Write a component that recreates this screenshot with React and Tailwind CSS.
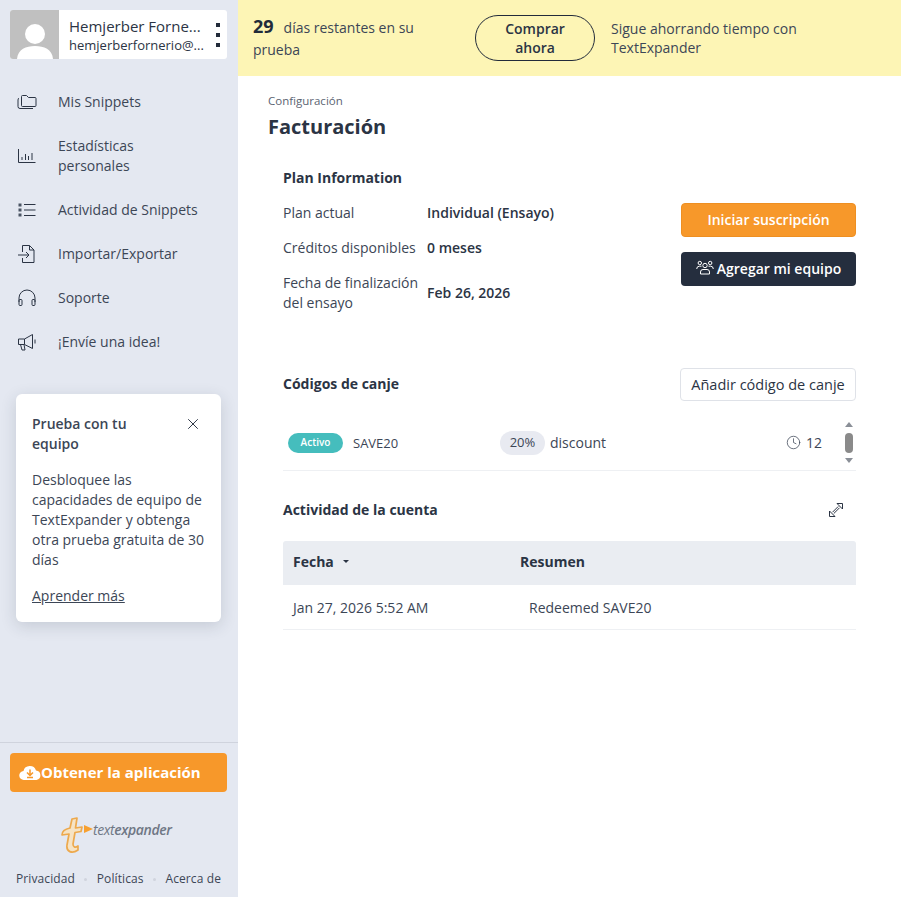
import { X, Clock } from 'lucide-react';

const iconProps = { width: 20, height: 20, viewBox: '0 0 20 20', fill: 'none', stroke: '#2b3444', strokeWidth: 1, className: 'shrink-0' };

function FolderIcon() {
  return (
    <svg {...iconProps}>
      <path d="M4.5 13.5 V4.5 Q4.5 3.5 5.5 3.5 H9.5 L11.5 5.5 H18 Q19 5.5 19 6.5 V13.5 Q19 14.5 18 14.5 H5.5 Q4.5 14.5 4.5 13.5 Z" />
      <path d="M2 6 Q1 6.5 1 8 V14.5 Q1 16.5 3 16.5 H16" />
    </svg>
  );
}

function ChartIcon() {
  return (
    <svg {...iconProps}>
      <path d="M1.5 3 V16.5 H18.5" />
      <path d="M5 14 V11 M8.5 14 V8 M11.5 14 V10 M15 14 V7" />
    </svg>
  );
}

function ListIcon() {
  return (
    <svg {...iconProps}>
      <rect x="1.5" y="3.5" width="3" height="3" fill="#4a5464" stroke="none" />
      <rect x="1.5" y="8.5" width="3" height="3" fill="#4a5464" stroke="none" />
      <rect x="1.5" y="13.5" width="3" height="3" fill="#4a5464" stroke="none" />
      <path d="M7 4.5 H18.5 M7 10 H18.5 M7 15.5 H18.5" />
    </svg>
  );
}

function ImportIcon() {
  return (
    <svg {...iconProps}>
      <path d="M5.5 8 V1.5 H12.5 L17 6 V18.5 H5.5 V14" />
      <path d="M12.5 1.5 V6 H17" />
      <path d="M1 11 H12 M9 8 L12 11 L9 14" />
    </svg>
  );
}

function HeadsetIcon() {
  return (
    <svg {...iconProps}>
      <path d="M2 14 V10 A8 8 0 0 1 18 10 V14" />
      <rect x="2" y="11.5" width="3" height="6" rx="1" />
      <rect x="15" y="11.5" width="3" height="6" rx="1" />
    </svg>
  );
}

function MegaphoneIcon() {
  return (
    <svg {...iconProps}>
      <path d="M1.5 7 H7.5 L15.5 2.5 V16.5 L7.5 12.5 H1.5 Z" />
      <path d="M7.5 7 V12.5" />
      <path d="M3.5 12.5 L5 18 H8 L7 12.5" />
      <path d="M18 7.5 V11.5" />
    </svg>
  );
}

const navItems = [
  { label: 'Mis Snippets', icon: FolderIcon },
  { label: 'Estadísticas personales', icon: ChartIcon },
  { label: 'Actividad de Snippets', icon: ListIcon },
  { label: 'Importar/Exportar', icon: ImportIcon },
  { label: 'Soporte', icon: HeadsetIcon },
  { label: '¡Envíe una idea!', icon: MegaphoneIcon },
];

function Logo() {
  return (
    <div className="flex items-start h-[38px] mt-[25px] pl-[49px]">
      <svg width="36" height="37" viewBox="0 0 34 37" fill="none" className="shrink-0">
        <path d="M12 2 L17 1 L15.5 11 L22 10 L21 14.5 L15 15.5 L13 27 C13 30 15 31 18 29 L18 33 C12 37 6 35 7 28 L9 17 L2 18 C2 14 5 12 10 11 Z" fill="#f6e3c4" stroke="#eda94d" strokeWidth="1.7" strokeLinejoin="round" />
        <path d="M24 8 L33 12 L24 16 Z" fill="#f7a030" />
      </svg>
      <span className="text-[14px] leading-[18px] mt-[4px] ml-[-2px] italic text-[#6f7785] tracking-[-0.4px]">
        text<span className="font-semibold">expander</span>
      </span>
    </div>
  );
}

function Sidebar() {
  return (
    <aside className="w-[238px] h-[897px] shrink-0 bg-[#e4e8f1] flex flex-col">
      <div className="flex ml-[10px] mr-[11px] mt-[10px] h-[49px] rounded-[3px] overflow-hidden bg-white">
        <div className="w-[49px] bg-[#c0c0c0] overflow-hidden shrink-0">
          <svg width="49" height="49" viewBox="0 0 49 49">
            <circle cx="25" cy="24" r="10" fill="#fff" />
            <path d="M7 49 C8 39 16 36 25 36 C34 36 42 39 43 49 Z" fill="#fff" />
          </svg>
        </div>
        <div className="flex-1 min-w-0 pl-[10px] pt-[6px]">
          <div className="text-[15px] leading-[20px] text-[#2b3444] whitespace-nowrap">Hemjerber Forne...</div>
          <div className="text-[13px] leading-[20px] text-[#2b3444] mt-[-1px] whitespace-nowrap">hemjerberfornerio@...</div>
        </div>
        <div className="w-[18px] flex flex-col items-center justify-center gap-[6px] shrink-0 pr-[1px]">
          <span className="w-[4px] h-[4px] bg-[#222b3a]" />
          <span className="w-[4px] h-[4px] bg-[#222b3a]" />
          <span className="w-[4px] h-[4px] bg-[#222b3a]" />
        </div>
      </div>

      <nav className="mt-[21px]">
        {navItems.map(({ label, icon: Icon }) => (
          <div key={label} className="flex items-center pl-[17px] pr-[30px] py-[12px] text-[14px] leading-[20px] text-[#3c4656]">
            <Icon />
            <span className={label.length > 22 ? 'ml-[21px] w-[110px]' : 'ml-[21px]'}>{label}</span>
          </div>
        ))}
      </nav>

      <div className="ml-[16px] mr-[17px] mt-[30px] h-[228px] bg-white rounded-[6px] shadow-[0_4px_16px_rgba(40,50,70,0.16)] px-[16px] pt-[20px]">
        <div className="flex justify-between">
          <div className="text-[14px] leading-[20px] font-semibold text-[#3c4656]">Prueba con tu<br />equipo</div>
          <X size={18} strokeWidth={1.3} className="text-[#2b3444] mt-[1px] mr-[3px]" />
        </div>
        <p className="text-[14px] leading-[20px] text-[#3c4656] mt-[16px]">
          Desbloquee las capacidades de equipo de TextExpander y obtenga otra prueba gratuita de 30 días
        </p>
        <a className="block text-[14px] leading-[20px] text-[#3c4656] underline mt-[16px]">Aprender más</a>
      </div>

      <div className="mt-auto border-t border-[#cfd3dd] h-[155px] pl-[10px] pr-[11px] pt-[10px]">
        <button className="w-full h-[39px] bg-[#f7982a] rounded-[4px] flex items-center pl-[9px] text-white text-[15px] font-bold">
          <svg width="22" height="18" viewBox="0 0 22 18" className="shrink-0">
            <path d="M5 16 A4.5 4.5 0 0 1 4.5 7 A6.5 6.5 0 0 1 17 6.5 A4.8 4.8 0 0 1 17.5 16 Z" fill="#fff" />
            <path d="M11 5.5 V11 M8 8.5 L11 11.5 L14 8.5 M8 13.5 H14" stroke="#f7982a" strokeWidth="1.5" fill="none" />
          </svg>
          Obtener la aplicación
        </button>
        <Logo />
        <div className="flex items-center justify-between px-[6px] mt-[16px] text-[12px] leading-[16px] text-[#3c4656] tracking-[0.1px]">
          <span>Privacidad</span>
          <span className="w-[3px] h-[3px] rounded-full bg-[#d0d4de]" />
          <span>Políticas</span>
          <span className="w-[3px] h-[3px] rounded-full bg-[#d0d4de]" />
          <span>Acerca de</span>
        </div>
      </div>
    </aside>
  );
}

function TrialBanner() {
  return (
    <div className="h-[76px] bg-[#fdf5b5] flex items-center pl-[15px] text-[14px] leading-[20px] text-[#3c4656]">
      <div className="w-[180px] mr-[42px] leading-[22px]">
        <span className="text-[18px] font-bold text-[#222b3a] mr-[10px]">29</span>
        días restantes en su prueba
      </div>
      <button className="w-[120px] h-[46px] border border-[#222b3a] rounded-[23px] text-[14px] leading-[19px] font-semibold text-[#2b3444] px-[20px]">
        Comprar ahora
      </button>
      <div className="w-[220px] ml-[16px] leading-[19.5px]">Sigue ahorrando tiempo con TextExpander</div>
    </div>
  );
}

function PlanRow({ label, value }) {
  return (
    <div className="flex items-center">
      <div className="w-[144px] text-[14px] leading-[20px] text-[#3c4656]">{label}</div>
      <div className="text-[14px] leading-[20px] font-semibold text-[#2b3444]">{value}</div>
    </div>
  );
}

function Billing() {
  return (
    <div className="pl-[45px] pr-[45px]">
      <div className="pt-[17px] ml-[-15px] text-[11.5px] leading-[16px] text-[#5b6472]">Configuración</div>
      <h1 className="ml-[-15px] mt-[4px] text-[20px] leading-[28px] font-bold text-[#2b3444]">Facturación</h1>

      <h2 className="mt-[27px] text-[14px] leading-[20px] font-bold text-[#2b3444]">Plan Information</h2>
      <div className="flex justify-between">
        <div className="mt-[15px] flex flex-col gap-[15px] w-[360px]">
          <PlanRow label="Plan actual" value="Individual (Ensayo)" />
          <PlanRow label="Créditos disponibles" value="0 meses" />
          <PlanRow label="Fecha de finalización del ensayo" value="Feb 26, 2026" />
        </div>
        <div className="flex flex-col gap-[15px] mt-[15px]">
          <button className="w-[175px] h-[34px] pb-[2px] rounded-[4px] bg-[#f7982a] border border-[#ee8f22] text-white text-[14px] font-semibold">Iniciar suscripción</button>
          <button className="w-[175px] h-[34px] pb-[2px] rounded-[4px] bg-[#252e3e] text-white text-[14px] font-semibold flex items-center justify-center gap-[3px]">
            <svg width="18" height="16" viewBox="0 0 18 16" fill="none" stroke="#fff" strokeWidth="1">
              <circle cx="9" cy="5.5" r="2.2" />
              <path d="M4.5 14 V12 Q4.5 9.5 7 9.5 H11 Q13.5 9.5 13.5 12 V14 Z" />
              <circle cx="3.8" cy="3" r="1.7" />
              <circle cx="14.2" cy="3" r="1.7" />
              <path d="M0.7 9 Q0.7 6.2 3.5 6.2 H5.5 M12.5 6.2 H14.5 Q17.3 6.2 17.3 9" />
            </svg>
            Agregar mi equipo
          </button>
        </div>
      </div>

      <div className="flex items-center justify-between mt-[55px]">
        <h2 className="text-[14px] leading-[20px] font-bold text-[#2b3444] mt-[-2px]">Códigos de canje</h2>
        <button className="w-[176px] h-[33px] border border-[#dfe2e8] rounded-[4px] text-[14.5px] text-[#2b3444]">Añadir código de canje</button>
      </div>

      <div className="relative mt-[18px] h-[52px] pb-[4px] border-b border-[#eef0f3] flex items-center pl-[5px] text-[#3c4656]">
        <span className="w-[55px] h-[20px] rounded-full bg-[#45bdbd] text-white text-[10px] font-semibold flex items-center justify-center shrink-0">Activo</span>
        <span className="ml-[10px] w-[147px] text-[13px] leading-[18px]">SAVE20</span>
        <span className="w-[45px] h-[24px] rounded-full bg-[#e8eaf1] text-[13px] font-medium flex items-center justify-center">20%</span>
        <span className="ml-[5px] text-[14px]">discount</span>
        <span className="ml-auto mr-[34px] flex items-center gap-[5px] text-[14px]">
          <Clock size={15} strokeWidth={1.2} />
          12
        </span>
        <div className="absolute right-[2px] top-[3px] w-[10px] flex flex-col items-center">
          <span className="w-0 h-0 border-x-[4px] border-x-transparent border-b-[5px] border-b-[#8a8f97]" />
          <span className="w-[8px] h-[20px] rounded-full bg-[#8a8a8a] mt-[6px]" />
          <span className="w-0 h-0 border-x-[4px] border-x-transparent border-t-[5px] border-t-[#8a8f97] mt-[5px]" />
        </div>
      </div>

      <div className="flex items-center justify-between mt-[29px]">
        <h2 className="text-[14px] leading-[20px] font-bold text-[#2b3444]">Actividad de la cuenta</h2>
        <svg width="16" height="16" viewBox="0 0 16 16" fill="none" stroke="#2b3444" strokeWidth="1" className="mr-[12px]">
          <path d="M1.5 9 V14.5 H7 Z" />
          <path d="M9 1.5 H14.5 V7 Z" />
          <path d="M4.5 10.2 L10.2 4.5 M5.8 11.5 L11.5 5.8" />
        </svg>
      </div>

      <div className="mt-[21px] h-[44px] pb-[3px] bg-[#eaedf2] rounded-t-[3px] flex items-center pl-[10px] text-[14px] font-bold text-[#2b3444]">
        <div className="w-[227px] flex items-center">
          Fecha
          <span className="ml-[9px] w-0 h-0 border-x-[3px] border-x-transparent border-t-[3px] border-t-[#2b3444]" />
        </div>
        <div>Resumen</div>
      </div>
      <div className="h-[45px] border-b border-[#eef0f3] flex items-center pl-[10px] text-[14px] text-[#3c4656]">
        <div className="w-[236px]">Jan 27, 2026 5:52 AM</div>
        <div>Redeemed SAVE20</div>
      </div>
    </div>
  );
}

export default function App() {
  return (
    <div className="flex w-[901px] h-[897px] overflow-hidden bg-white font-['Open_Sans',sans-serif]">
      <Sidebar />
      <main className="flex-1 min-w-0">
        <TrialBanner />
        <Billing />
      </main>
    </div>
  );
}
